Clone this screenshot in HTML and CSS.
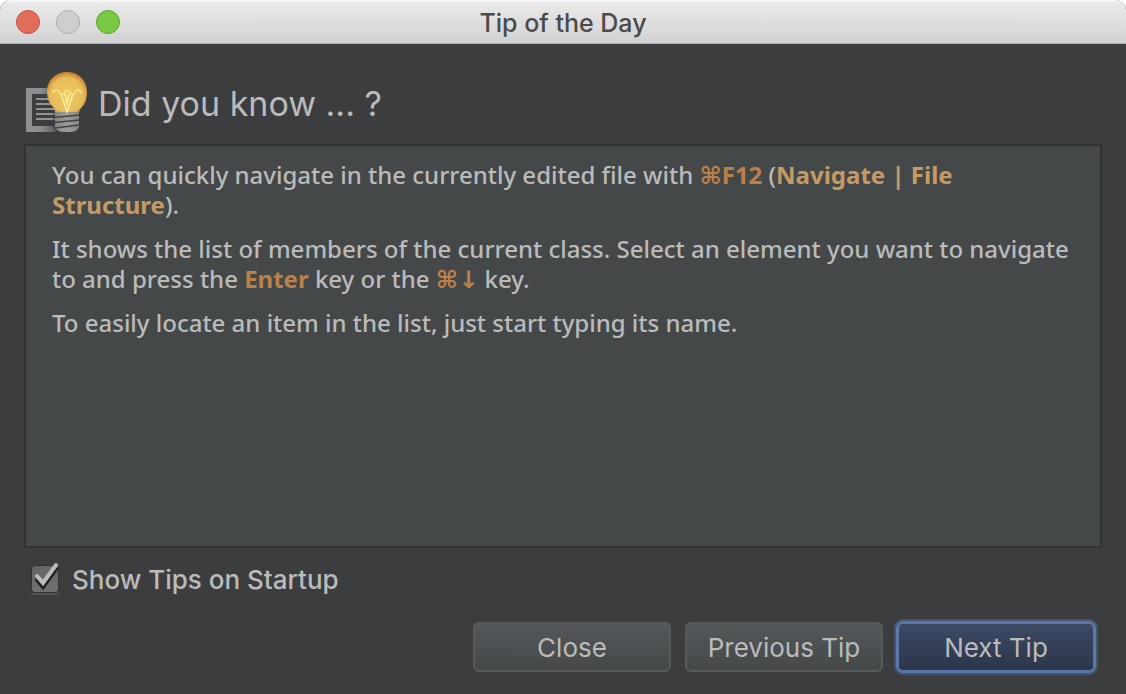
FILE: index.html
```html
<!DOCTYPE html>
<html lang="en">
<head>
<meta charset="utf-8">
<title>Tip of the Day</title>
<link rel="stylesheet" href="styles.css">
</head>
<body>
<div class="window">
  <header class="titlebar">
    <div class="lights">
      <button class="light light-close" aria-label="Close window"></button>
      <button class="light light-min" aria-label="Minimize window" disabled></button>
      <button class="light light-zoom" aria-label="Zoom window"></button>
    </div>
    <div class="title">Tip of the Day</div>
  </header>
  <main class="content">
    <div class="heading">
      <svg class="bulb" width="64" height="64" viewBox="0 0 64 64" aria-hidden="true">
        <defs>
          <radialGradient id="glass" cx="50%" cy="56%" r="55%">
            <stop offset="0" stop-color="#ecc95e"/>
            <stop offset="0.75" stop-color="#e8bd5d"/>
            <stop offset="1" stop-color="#c6822f"/>
          </radialGradient>
          <linearGradient id="page" x1="0" x2="1" y1="0" y2="0">
            <stop offset="0" stop-color="#929292"/>
            <stop offset="0.5" stop-color="#8c8c8c"/>
            <stop offset="1" stop-color="#5a5b5c"/>
          </linearGradient>
          <linearGradient id="base" x1="0" x2="1" y1="0" y2="0">
            <stop offset="0" stop-color="#858585"/>
            <stop offset="0.5" stop-color="#9b9b9b"/>
            <stop offset="1" stop-color="#858585"/>
          </linearGradient>
        </defs>
        <path fill="url(#page)" d="M2 18H26V24H8V56H32V62H2Z"/>
        <path fill="#929292" d="M12 28h18v2H12zM12 33h20v2H12zM12 38h20v2H12zM12 43h20v2H12zM12 48h20v2H12z"/>
        <path fill="#3c3d3f" d="M29 42h3v15l4 5h-5l-3-5z" opacity=".45"/>
        <path fill="url(#glass)" d="M43 2C31 2 23 11 23 22c0 8 3 12 6 15 2 2 2 4 2 6h24c0-2 1-4 3-6 3-3 5-8 5-15C63 11 55 2 43 2z"/>
        <path fill="url(#base)" d="M31 42H55V55q0 7-8 7H39q-8 0-8-7Z"/>
        <path fill="none" stroke="#414244" stroke-width="1.6" d="M30 47.500L56 45M30 52.500L56 50M31 58L55 55"/>
        <path fill="none" stroke="#fbe68a" stroke-width="1.500" d="M29 23c1-4 6-4 7 0 1 2 4 2 5-1 1-2 4-2 5 0 1 3 4 3 5 1 1-4 5-4 6 0"/>
        <path fill="none" stroke="#fff0a0" stroke-width="1.500" d="M37 24L43 42L49 24M41 24L43 35L45 24"/>
      </svg>
      <h1 class="question">Did you know ... ?</h1>
    </div>
    <article class="tip">
      <p>You can quickly navigate in the currently edited file with <b class="key">⌘F12</b> (<b class="menu">Navigate | File Structure</b>).</p>
      <p>It shows the list of members of the current class. Select an element you want to navigate to and press the <b class="key">Enter</b> key or the <b class="key">⌘↓</b> key.</p>
      <p>To easily locate an item in the list, just start typing its name.</p>
    </article>
    <div class="startup">
      <span class="tick">
        <input class="box" type="checkbox" id="startup" checked>
        <svg class="check" width="32" height="34" viewBox="0 0 32 34" aria-hidden="true">
          <path fill="none" stroke="#202122" stroke-width="4" stroke-linecap="round" d="M9 18L15 25L28 7"/>
          <path fill="none" stroke="#bcbcbc" stroke-width="4" stroke-linecap="round" d="M9 14L15 21L28 3"/>
        </svg>
      </span>
      <label for="startup">Show Tips on Startup</label>
    </div>
    <div class="actions">
      <button class="btn">Close</button>
      <button class="btn">Previous Tip</button>
      <button class="btn btn-default">Next Tip</button>
    </div>
  </main>
</div>
</body>
</html>
```
FILE: styles.css
```css
* { box-sizing: border-box; }

body {
  margin: 0;
  background: #fff;
  color: #bbb;
  font-family: Inter, Roboto, sans-serif;
  font-size: 26px;
}

.window {
  display: flex;
  flex-direction: column;
  min-height: 100vh;
  overflow: hidden;
  border-radius: 10px 10px 0 0;
  background: #3c3d3f;
}

.titlebar {
  display: grid;
  grid-template-columns: 1fr auto 1fr;
  align-items: center;
  height: 44px;
  padding: 0 16px;
  border-bottom: 1px solid #b1b1b1;
  background: linear-gradient(#ebebeb, #d2d2d2);
  box-shadow: inset 0 2px 0 #f5f5f5;
}

.lights { display: flex; gap: 16px; }

.light {
  width: 24px;
  height: 24px;
  padding: 0;
  border: 1px solid;
  border-radius: 50%;
}

.light-close { background: #e06c5a; border-color: #c95040; }
.light-min { background: #cecece; border-color: #adadad; }
.light-zoom { background: #78c842; border-color: #58a82b; }

.title {
  padding-top: 2px;
  color: #4a4a4a;
  font-size: 25px;
  font-weight: 500;
}

.content {
  display: flex;
  flex: 1;
  flex-direction: column;
  padding: 26px 24px 22px;
}

.heading {
  display: flex;
  align-items: center;
  gap: 10px;
  height: 64px;
  margin-bottom: 10px;
}

.question {
  margin: 0;
  padding-top: 2px;
  font-size: 34px;
  font-weight: 400;
}

.tip {
  flex: 1;
  padding: 14px 26px;
  border: 2px solid #323334;
  background: #454849;
  font-family: "Noto Sans", "DejaVu Sans", sans-serif;
  font-size: 24px;
  font-weight: 500;
  line-height: 30px;
}

.tip p { margin: 0 0 14px; }

.key { color: #bc8048; }
.menu { color: #c59b65; }

.startup {
  display: flex;
  align-items: center;
  gap: 12px;
  height: 34px;
  margin: 14px 0 26px 4px;
  font-weight: 500;
}

.tick {
  display: grid;
  width: 32px;
  height: 34px;
}

.tick > * { grid-area: 1 / 1; }

.box {
  width: 28px;
  height: 28px;
  margin: 3px;
  appearance: none;
  border: 1px solid #303132;
  border-radius: 4px;
  background: linear-gradient(#656565, #707070);
  box-shadow: 0 2px 0 #535455;
}

.check { pointer-events: none; }

.actions {
  display: flex;
  justify-content: flex-end;
  gap: 14px;
  padding-right: 7px;
}

.btn {
  width: 198px;
  height: 50px;
  padding: 0;
  border: 2px solid #57595a;
  border-radius: 6px;
  background: linear-gradient(#535759, #45494a);
  color: #bbb;
  font: inherit;
}

.btn-default {
  border-color: #5b78aa;
  background: linear-gradient(#3c4a65, #2c364b);
  box-shadow: 0 0 0 1px #5b78aa, 0 0 0 3px #46546c;
}
```
